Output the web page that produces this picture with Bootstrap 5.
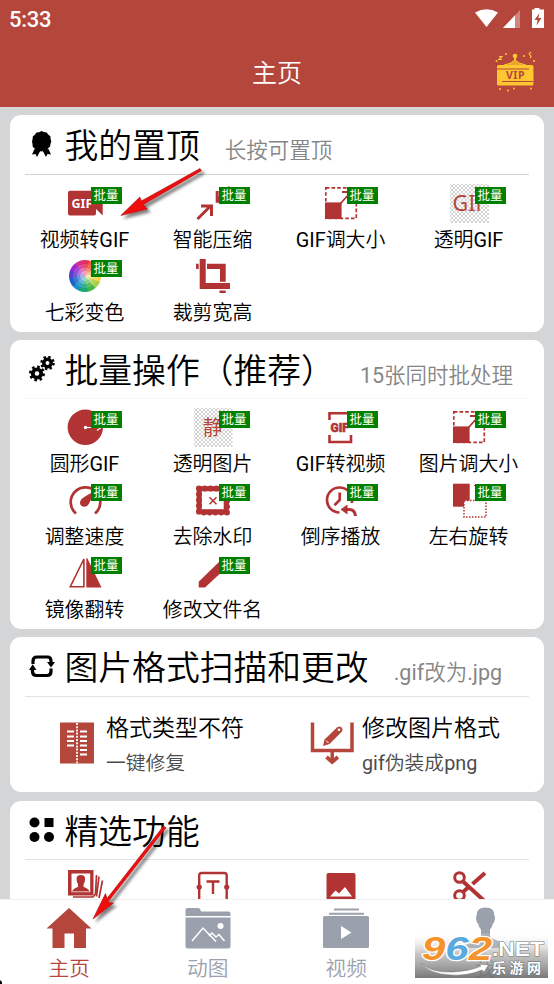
<!DOCTYPE html>
<html lang="zh-CN">
<head>
<meta charset="utf-8">
<meta name="viewport" content="width=device-width, initial-scale=1">
<title>主页</title>
<link href="https://cdn.jsdelivr.net/npm/bootstrap@5.3.0/dist/css/bootstrap.min.css" rel="stylesheet">
<style>
:root{--brand:#b5463b;--ic:#b13333;}
body{width:554px;height:984px;background:#d4d5d7;font-family:Roboto,"Noto Sans CJK SC",sans-serif;font-weight:350;color:#000;}
svg{display:block;flex:none}
.topbar{background:var(--brand);height:107px}
.statusbar{height:38px;padding:0 8px 0 9px}
.clock{font-size:22px;font-weight:500;line-height:38px;padding-top:1px;letter-spacing:-.3px}
.apptitle{font-size:25px;line-height:71px;font-weight:350}
.vip{right:17px;top:49px}
.content{height:792px;padding:8px 10px 0 10px;gap:8.3px}
.panel{border:0;border-radius:11px;padding:0 11px;flex:none}
.p1{height:216.7px}.p2{height:289px}.p3{height:155px}.p4{height:180px}
.panel-head{height:59.5px;margin:0 4px;border-bottom:1px solid #d2d2d2;padding-left:3.500px}
.p2 .panel-head{border-color:#f6f6f6}.p3 .panel-head,.p4 .panel-head{border-color:#e2e2e2}
.p4 .panel-head{height:59px}
.hicon{width:26px;height:26px}
.htitle{font-size:33.8px;line-height:64px;margin-left:10px}
.hnote{font-size:21.500px;line-height:58px;margin-left:25px;color:#868686}
.tile{height:73px}
.tiles{padding-top:8px;margin:0 .500px 0 -.500px}
.p4 .tiles{padding-top:7px}
.tile svg.ti,.wheelbox{width:40px;height:40px}
.tname{font-size:19.9px;line-height:35px;white-space:nowrap}
.batch{left:calc(50% + 6px);top:4px;width:31px;height:17px;background:#008000;color:#fff;font-size:12.4px;line-height:17px;font-weight:400;text-align:center}
.wheelbox{padding:4px}
.wheeldisc{width:32px;height:32px;border-radius:50%;background:radial-gradient(circle,#fff8 0 5px,#fff5 5px 8px,#fff2 8px 12px,transparent 12px),conic-gradient(#e5305a 0 15deg,#ee5a3a 15deg 45deg,#f59a32 45deg 75deg,#fbd44a 75deg 112deg,#a5d048 112deg 140deg,#43b649 140deg 170deg,#18a673 170deg 200deg,#1b8fc9 200deg 230deg,#1c62c8 230deg 262deg,#5a3fce 262deg 290deg,#9a2bd0 290deg 320deg,#d32f9c 320deg 345deg,#e5305a 345deg)}
.ftitle{font-size:23px;line-height:34px}
.fnote{font-size:19.8px;line-height:35px;color:#4c4c4c}
.feats{padding-top:15px}
.feat{padding-left:24px;gap:10px}
.tabbar{height:85px;border-top:1px solid #f0f0f0;padding-top:7px;color:#9aa1ac}
.tabbar .on{color:var(--brand)}
.tablabel{font-size:20.7px;line-height:38px}
.tabicon{width:48px;height:43px}
.stamp{left:415px;top:933px;width:134px;height:45px}
.arrows{left:0;top:0}
</style>
<script src="https://cdn.jsdelivr.net/npm/bootstrap@5.3.0/dist/js/bootstrap.bundle.min.js"></script>
</head>
<body class="position-relative overflow-hidden d-flex flex-column">
<svg width="0" height="0" class="position-absolute">
<defs>
<pattern id="chk" width="4" height="4" patternUnits="userSpaceOnUse"><rect width="4" height="4" fill="#fff"/><path d="M0 0h2v2H0zM2 2h2v2H2z" fill="#d4d4d4"/></pattern>
<symbol id="resize" viewBox="0 0 40 40"><rect x="4.800" y="4.800" width="30.500" height="30.500" fill="none" stroke="#b13333" stroke-width="1.700" stroke-dasharray="3.600 2.100"/><path d="M4 19.400h16.600V36H4z" fill="#b13333"/><path d="M19.500 20.500 30 9M21 9h9v9" fill="none" stroke="#b13333" stroke-width="1.800"/></symbol>
</defs>
</svg>

<header class="topbar text-white position-relative flex-shrink-0">
  <div class="statusbar d-flex justify-content-between align-items-center">
    <span class="clock">5:33</span>
    <svg width="76" height="24" viewBox="0 0 76 24"><path d="M5 5.500Q16.500-1 28 5.500L16.500 20z" fill="#fff"/><path d="M50 3v18H33z" fill="#fff" opacity=".35"/><path d="M45 8.300V21H33z" fill="#fff"/><path d="M62 2.500h2.500V1h5v1.500H74V21H62z" fill="#fff"/><path d="m69.500 6-5 7h3l-1 5.500 5-7.500h-3.200z" fill="#b5463b"/></svg>
  </div>
  <div class="apptitle text-center">主页</div>
  <svg class="vip position-absolute" width="42" height="44" viewBox="0 0 42 44"><g fill="#fec62f"><circle cx="20" cy="7" r="2.300"/><path d="M19 8h2v3h-2z"/><rect x="2" y="16" width="36.500" height="20.500" rx="1.600"/></g><path d="M9 16q7-1 11-5 4 4 11 5" fill="#e9a42d" stroke="#fec62f"/><path d="M2 20h32M7 32.500h31.500" stroke="#b5463b" stroke-width="1"/><text x="20.500" y="30" text-anchor="middle" font-family="Noto Sans" font-weight="700" font-size="10.500" letter-spacing=".6" fill="#b5463b">VIP</text><path d="M4 7.500h3l-3 3h3M36 3q-3 2-1 3 2 1 0 3" fill="none" stroke="#fec62f" stroke-width="1.200"/><g fill="#fec62f"><circle cx="11" cy="5" r="1"/><circle cx="29" cy="7" r="1"/><circle cx="39" cy="12" r="1.100"/><circle cx="1.500" cy="12" r="1"/><circle cx="5" cy="40" r="1"/><circle cx="13" cy="41.500" r="1"/><circle cx="19" cy="39.500" r="1"/><circle cx="36" cy="39.500" r="1"/></g></svg>
</header>

<main class="content d-flex flex-column overflow-hidden flex-shrink-0">
  <section class="card panel p1">
    <div class="panel-head d-flex">
      <div class="d-flex align-items-center"><svg class="hicon" viewBox="0 0 26 26"><path d="m12.500 0 2.500 1 2.700.5 1.700 2.200 2 1.600.2 2.700.7 2.500-.9 2.500-.3 2.600-1.900 1.700-1.600 2.100-2.600.3-2.500.8-2.500-.6-2.700-.4-1.600-2.100-2-1.700-.2-2.600L3 10.500l.6-2.400.2-2.700 2-1.600 1.700-2.200 2.700-.4z"/><path d="M5.500 18 3 23.500l3.500-.5 1.500 3 3.500-6.500zM19.500 18l2.500 5.500-3.500-.5-1.500 3-3.500-6.500z"/></svg></div>
      <div class="d-flex align-items-baseline"><span class="htitle">我的置顶</span><span class="hnote">长按可置顶</span></div>
    </div>
    <div class="row row-cols-4 g-0 tiles">
      <div class="col tile position-relative d-flex flex-column align-items-center"><svg class="ti" viewBox="0 0 40 40"><path d="M5 7.700h24q2 0 2 2v7l6.700-6.500V32.500L31 26v4.500q0 2-2 2H5q-2 0-2-2V9.700q0-2 2-2z" fill="#b13333"/><text x="6.500" y="25" font-family="Noto Sans" font-size="12.500" font-weight="700" fill="#fff">GIF</text></svg><span class="badge rounded-0 p-0 batch position-absolute">批量</span><span class="tname">视频转<span class="fw-normal">GIF</span></span></div>
      <div class="col tile position-relative d-flex flex-column align-items-center"><svg class="ti" viewBox="0 0 40 40" fill="none" stroke="#b13333" stroke-width="3"><path d="M4.500 36 18 22.500M8 23h10.500v10M37 4 24 17.500M24.200 8v10.200H35"/></svg><span class="badge rounded-0 p-0 batch position-absolute">批量</span><span class="tname">智能压缩</span></div>
      <div class="col tile position-relative d-flex flex-column align-items-center"><svg class="ti"><use href="#resize"/></svg><span class="badge rounded-0 p-0 batch position-absolute">批量</span><span class="tname"><span class="fw-normal">GIF</span>调大小</span></div>
      <div class="col tile position-relative d-flex flex-column align-items-center"><svg class="ti" viewBox="0 0 40 40"><path d="M1 1h39v39H1z" fill="url(#chk)"/><text x="3.500" y="28" font-family="Noto Sans" font-size="21.500" font-weight="400" fill="#b5463b">GIF</text></svg><span class="badge rounded-0 p-0 batch position-absolute">批量</span><span class="tname">透明<span class="fw-normal">GIF</span></span></div>
      <div class="col tile position-relative d-flex flex-column align-items-center"><div class="wheelbox"><div class="wheeldisc"></div></div><span class="badge rounded-0 p-0 batch position-absolute">批量</span><span class="tname">七彩变色</span></div>
      <div class="col tile position-relative d-flex flex-column align-items-center"><svg class="ti" viewBox="0 0 40 40" fill="#b13333"><path d="M6.700 3h6v24H37v6H6.700zM14 7.700h18.700v18H27V13H14zM3 7.700h2.700V13H3zM26.500 34.500h6.200V37h-6.200z"/></svg><span class="tname">裁剪宽高</span></div>
    </div>
  </section>

  <section class="card panel p2">
    <div class="panel-head d-flex">
      <div class="d-flex align-items-center"><svg class="hicon" viewBox="0 0 26 26" fill="none" stroke="#000"><circle cx="8" cy="17.500" r="4.200" stroke-width="3.800"/><circle cx="8" cy="17.500" r="6.700" stroke-width="2.600" stroke-dasharray="2.600 2.660"/><circle cx="18.500" cy="7" r="3.700" stroke-width="3.500"/><circle cx="18.500" cy="7" r="6" stroke-width="2.500" stroke-dasharray="2.400 2.310"/></svg></div>
      <div class="d-flex align-items-baseline"><span class="htitle">批量操作（推荐）</span><span class="hnote"><span class="fw-normal">15</span>张同时批处理</span></div>
    </div>
    <div class="row row-cols-4 g-0 tiles">
      <div class="col tile position-relative d-flex flex-column align-items-center"><svg class="ti" viewBox="0 0 40 40"><circle cx="20.300" cy="20.300" r="17.700" fill="#b13333"/><path d="M20 20.500h15M32 23.500l4-3" stroke="#fff" stroke-width="1.200" fill="none"/><circle cx="20.500" cy="20.500" r="1.700" fill="#fff"/></svg><span class="badge rounded-0 p-0 batch position-absolute">批量</span><span class="tname">圆形<span class="fw-normal">GIF</span></span></div>
      <div class="col tile position-relative d-flex flex-column align-items-center"><svg class="ti" viewBox="0 0 40 40"><path d="M1 1h38.500v39H1z" fill="url(#chk)"/><text x="9.800" y="27.500" font-family="Noto Sans CJK SC" font-size="20" font-weight="400" fill="#b5463b">静</text></svg><span class="badge rounded-0 p-0 batch position-absolute">批量</span><span class="tname">透明图片</span></div>
      <div class="col tile position-relative d-flex flex-column align-items-center"><svg class="ti" viewBox="0 0 40 40"><path d="M8.500 13V6.300h21.500V13M8.500 28v7H30v-7" fill="none" stroke="#b13333" stroke-width="2.600"/><text x="9.500" y="25" font-family="Roboto" font-size="12" font-weight="900" fill="#b13333" stroke="#b13333" stroke-width=".5">GIF</text></svg><span class="badge rounded-0 p-0 batch position-absolute">批量</span><span class="tname"><span class="fw-normal">GIF</span>转视频</span></div>
      <div class="col tile position-relative d-flex flex-column align-items-center"><svg class="ti"><use href="#resize"/></svg><span class="badge rounded-0 p-0 batch position-absolute">批量</span><span class="tname">图片调大小</span></div>
      <div class="col tile position-relative d-flex flex-column align-items-center"><svg class="ti" viewBox="0 0 40 40"><path d="M11 33.500A14.800 14.800 0 1 1 30 33.500" fill="none" stroke="#b13333" stroke-width="2.700"/><path d="M28 12q-1 7-4.200 12-2 3.500-5.500 2.700-3.700-1.200-3.300-4.700.6-2.800 3.500-4.500Q23 14.500 28 12z" fill="#b13333"/></svg><span class="badge rounded-0 p-0 batch position-absolute">批量</span><span class="tname">调整速度</span></div>
      <div class="col tile position-relative d-flex flex-column align-items-center"><svg class="ti" viewBox="0 0 40 40"><path d="M6.200 8.700h27v23h-27z" fill="none" stroke="#b13333" stroke-width="5"/><path d="M6 8.500h28v24H6z" fill="none" stroke="#b13333" stroke-width="6" stroke-dasharray="0 5.780" stroke-linecap="round"/><path d="m16.500 17.200 7 7m0-7-7 7" stroke="#b13333" stroke-width="1.500"/></svg><span class="badge rounded-0 p-0 batch position-absolute">批量</span><span class="tname">去除水印</span></div>
      <div class="col tile position-relative d-flex flex-column align-items-center"><svg class="ti" viewBox="0 0 40 40" fill="none" stroke="#b13333" stroke-width="2.700"><path d="M18.500 32.500a12.500 12.500 0 1 1 12.500-12.500v3M18.700 12.500v7.500l-5.200 5.300"/><path d="M24 29.500h4q6 0 6.500 6.500" stroke-width="3"/><path d="m19.500 29.500 7-5v10z" fill="#b13333" stroke="none"/></svg><span class="badge rounded-0 p-0 batch position-absolute">批量</span><span class="tname">倒序播放</span></div>
      <div class="col tile position-relative d-flex flex-column align-items-center"><svg class="ti" viewBox="0 0 40 40"><path d="M4 3.700h16.700v23H4z" fill="#b13333"/><path d="M15 20.500h22v16.500H15z" fill="#fff" stroke="#b13333" stroke-width="1.500" stroke-dasharray="1.500 1.500"/><path d="M25 5.500h6v8" fill="none" stroke="#b13333" stroke-dasharray="1.500 1.500"/></svg><span class="badge rounded-0 p-0 batch position-absolute">批量</span><span class="tname">左右旋转</span></div>
      <div class="col tile position-relative d-flex flex-column align-items-center"><svg class="ti" viewBox="0 0 40 40"><path d="M5.300 33.700 18.900 6v27.700z" fill="none" stroke="#b13333" stroke-width="1.600"/><path d="M21.300 5.300h1L36.500 34.500H21.300z" fill="#b13333"/></svg><span class="badge rounded-0 p-0 batch position-absolute">批量</span><span class="tname">镜像翻转</span></div>
      <div class="col tile position-relative d-flex flex-column align-items-center"><svg class="ti" viewBox="0 0 40 40"><path d="M5.700 34.600v-5.800L26 9l6.500 6.500-20.500 19.100z" fill="#b13333"/></svg><span class="badge rounded-0 p-0 batch position-absolute">批量</span><span class="tname">修改文件名</span></div>
    </div>
  </section>

  <section class="card panel p3">
    <div class="panel-head d-flex">
      <div class="d-flex align-items-center"><svg class="hicon" viewBox="0 0 26 26"><g fill="none" stroke="#000" stroke-width="3.200"><path d="M4 10V7q0-4 4-4h10.500q3.500 0 3.500 4v3M3.500 14v3.500q0 4 4 4H18q4 0 4-4v-3"/></g><path d="M18 8h8l-4 5.500zM0 16h7.500L3.700 10.200z"/></svg></div>
      <div class="d-flex align-items-baseline"><span class="htitle">图片格式扫描和更改</span><span class="hnote"><span class="fw-normal">.gif</span>改为<span class="fw-normal">.jpg</span></span></div>
    </div>
    <div class="row g-0 feats">
      <div class="col-6 d-flex feat"><svg width="51" height="64" viewBox="0 0 51 64"><path d="M15 10.500h34v41H15z" fill="#b5463b"/><path d="M32 11v40" stroke="#fff" stroke-width="1.800" stroke-dasharray="2 1.200"/><path d="M22 19.500h7M22 24.500h7M22 29h7M22 33.500h7M35 19.500h7M35 24.500h7M35 29h7M35 33.500h7M35 38h7M35 42.500h7" stroke="#fff" stroke-width="1.800"/></svg><div class="d-flex flex-column"><span class="ftitle">格式类型不符</span><span class="fnote">一键修复</span></div></div>
      <div class="col-6 d-flex feat"><svg class="overflow-visible" width="51" height="64" viewBox="0 0 51 64"><g transform="translate(6.500)"><path d="M5 10.500v28h39.500v-28" fill="none" stroke="#b5463b" stroke-width="3.500"/><path d="M24.700 38v11" stroke="#b5463b" stroke-width="3.500"/><path d="m19 45 5.700 5 5.700-5" fill="none" stroke="#b5463b" stroke-width="3.800"/><path d="m15.500 34 1.500-6.500L29.500 15.500q2.500-2 4.500 0t0 4.500L22 32z" fill="#b5463b"/><path d="m18.500 28.500 2.500 2.500" stroke="#fff"/><circle cx="31.500" cy="17.800" r="1.300" fill="#fff"/></g></svg><div class="d-flex flex-column"><span class="ftitle">修改图片格式</span><span class="fnote"><span class="fw-normal">gif</span>伪装成<span class="fw-normal">png</span></span></div></div>
    </div>
  </section>

  <section class="card panel p4">
    <div class="panel-head d-flex">
      <div class="d-flex align-items-center"><svg class="hicon" viewBox="0 0 26 26"><circle cx="5.500" cy="5.500" r="5"/><path d="M15.500 1h9v9h-9z"/><circle cx="5.500" cy="20" r="5"/><circle cx="20" cy="20" r="5"/></svg></div>
      <div class="d-flex align-items-baseline"><span class="htitle">精选功能</span></div>
    </div>
    <div class="row row-cols-4 g-0 tiles">
      <div class="col tile d-flex flex-column align-items-center"><svg class="ti" viewBox="0 0 40 40"><path d="M3 3h25.500v25.500H3z" fill="#b13333"/><path d="M6.500 6.500h18.700v18.700H6.500z" fill="#fff"/><path d="M7 24.500q1.500-3.500 6-4.500v-3q-1.500-2-1.500-5 0-4 4.300-4t4.300 4q0 3-1.500 5v3q4.500 1 6 4.500z" fill="#b13333"/><path d="m31.500 8-1 19-2.500 3H8M34 9.500l-2.500 20M37.500 13.500 34 31" fill="none" stroke="#b13333" stroke-width="1.700"/></svg></div>
      <div class="col tile d-flex flex-column align-items-center"><svg class="ti" viewBox="0 0 40 40"><path d="M6.200 40V8.500Q6.200 6 8.700 6h22.500q2.500 0 2.500 2.500V40M13.500 14.500h13M20 14.500v12.500" fill="none" stroke="#b13333" stroke-width="2.400"/><circle cx="6.200" cy="20" r="2.600" fill="#b13333"/><circle cx="33.700" cy="20" r="2.600" fill="#b13333"/></svg></div>
      <div class="col tile d-flex flex-column align-items-center"><svg class="ti" viewBox="0 0 40 40"><rect x="5.500" y="6" width="29" height="32" rx="2" fill="#b13333"/><path d="m9 29.500 5.500-6 3.500 3 6-6.500 7 9.500z" fill="#fff"/></svg></div>
      <div class="col tile d-flex flex-column align-items-center"><svg class="ti" viewBox="0 0 40 40" fill="none" stroke="#b13333"><circle cx="10.500" cy="10.500" r="4.800" stroke-width="3"/><circle cx="10.500" cy="28.500" r="4.800" stroke-width="3"/><path d="M13.500 14 36 34.500" stroke-width="4"/><path d="M13.500 25.500 21 18.800M23.500 17 36 6" stroke-width="4"/></svg></div>
    </div>
  </section>
</main>

<nav class="tabbar bg-white d-flex flex-shrink-0">
  <div class="on flex-fill w-25 d-flex flex-column align-items-center"><svg class="tabicon" viewBox="0 0 48 43" fill="currentColor"><path d="M24 1 46.500 21.500H41V41H29V26.500H19.500V41H7.500V21.500H1.500z"/></svg><span class="tablabel">主页</span></div>
  <div class="flex-fill w-25 d-flex flex-column align-items-center"><svg class="tabicon" viewBox="0 0 48 43"><path d="M1.500 9V3q0-2 2-2H14q2 0 2.500 2l.5 1.500h27.500q2 0 2 2V9zM1.500 10.500h45V39q0 2.500-2.500 2.500H4Q1.500 41.500 1.500 39z" fill="currentColor"/><path d="m8 34 11-13 13 13.500M25 29l3-3 4 4 3-2.500 5.500 6.500" fill="none" stroke="#fff" stroke-width="1.500"/><circle cx="36.500" cy="19" r="3" fill="#fff"/></svg><span class="tablabel">动图</span></div>
  <div class="flex-fill w-25 d-flex flex-column align-items-center"><svg class="tabicon" viewBox="0 0 48 43"><path d="M12 1.500h25v2H12zM7 5.700h35v2H7z" fill="currentColor"/><rect x="1" y="9" width="46" height="32" rx="1.500" fill="currentColor"/><path d="M19 19v13l10.500-6.500z" fill="#fff"/></svg><span class="tablabel">视频</span></div>
  <div class="flex-fill w-25 d-flex flex-column align-items-center"><svg class="tabicon" viewBox="0 0 48 43" fill="currentColor"><path d="M15.500 9Q15 .5 24.500.5 34 .5 33.500 9q1 1 0 5-.7 2-1.500 2.500-1 4-3 6v6.500q0 2 6 4 9 2.500 10 8H4q1-5.500 10-8 6-2 6-4v-6.500q-2-2-3-6-.8-.5-1.500-2.500-1-4 0-5z"/></svg><span class="tablabel">我</span></div>
</nav>

<svg class="arrows position-absolute" width="554" height="984" viewBox="0 0 554 984">
  <defs><filter id="sh" x="-20%" y="-20%" width="150%" height="150%"><feDropShadow dx="3" dy="3" stdDeviation="1.600" flood-opacity=".5"/></filter></defs>
  <g filter="url(#sh)" fill="#f00c0c" stroke="#a01515" stroke-width=".6">
    <path d="m200 168.500 1.500 2.200-58 33.800 3.800 4.500-26.500 6.500 19-18.500 1.500 4z"/>
    <path d="m163.500 826 2.500 1.800-58.500 74.700 6 .5-20.500 16 12.500-25.500 1.500 5z"/>
  </g>
  <path d="m0 980 2 2v2H0z"/>
</svg>

<svg class="stamp position-absolute" width="134" height="45" viewBox="0 0 134 45">
  <defs><linearGradient id="wg" x1="0" y1="0" x2="0" y2="1"><stop offset="0" stop-color="#fff" stop-opacity=".1"/><stop offset=".45" stop-color="#aaa" stop-opacity=".65"/><stop offset="1" stop-color="#666" stop-opacity=".88"/></linearGradient></defs>
  <path d="M0 0h133v45H0z" fill="url(#wg)"/>
  <text x="7" y="27" textLength="70" lengthAdjust="spacingAndGlyphs" font-family="Liberation Sans" font-weight="700" font-style="italic" font-size="34" stroke-width="2.500" stroke="#fff" paint-order="stroke" fill="#f5922a">9<tspan fill="#5aa9dc">6</tspan>2</text>
  <text x="77" y="22.500" font-family="Liberation Sans" font-weight="700" font-size="20" textLength="52" lengthAdjust="spacingAndGlyphs" fill="#fff" stroke="#777" stroke-width="1" paint-order="stroke">.NET</text>
  <path d="M6 30q10 10 32 9 18-1 28-6l-2-2 9.500 1-4.500 7-2-2Q53 43 36 42 14 41 6 30z" fill="#fff" stroke="#777" stroke-width=".5"/>
  <text x="77" y="40" font-family="Noto Sans CJK SC" font-weight="700" font-size="14" letter-spacing="3.500" fill="#fff" stroke="#666" stroke-width=".8" paint-order="stroke">乐游网</text>
</svg>
</body>
</html>
